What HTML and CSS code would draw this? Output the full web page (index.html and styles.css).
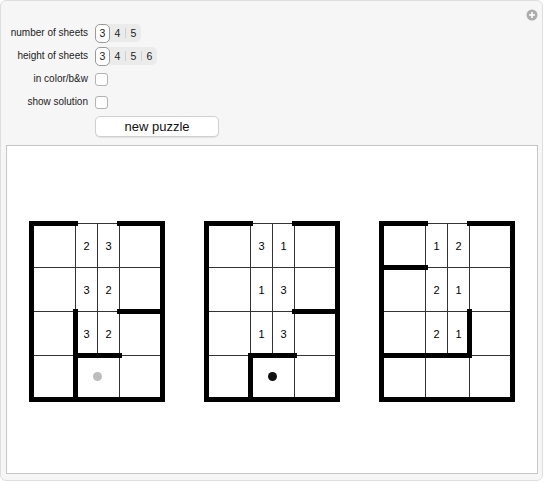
FILE: index.html
```html
<!DOCTYPE html>
<html>
<head>
<meta charset="utf-8">
<link rel="stylesheet" href="styles.css">
</head>
<body>
<div class="panel">
  <svg class="plus" width="12" height="12" viewBox="0 0 12 12">
    <circle cx="6" cy="6" r="5.5" fill="#acacac"/>
    <path d="M6 3v6M3 6h6" stroke="#fff" stroke-width="1.6"/>
  </svg>
  <div class="controls">
    <div class="label">number of sheets</div>
    <div class="seg">
      <span class="opt sel">3</span><span class="opt">4</span><span class="sep"></span><span class="opt">5</span>
    </div>
    <div class="label">height of sheets</div>
    <div class="seg">
      <span class="opt sel">3</span><span class="opt">4</span><span class="sep"></span><span class="opt">5</span><span class="sep"></span><span class="opt">6</span>
    </div>
    <div class="label">in color/b&amp;w</div>
    <div class="cell"><span class="check"></span></div>
    <div class="label">show solution</div>
    <div class="cell"><span class="check"></span></div>
    <div class="label"></div>
    <div class="cell"><button class="btn">new puzzle</button></div>
  </div>
  <div class="pane">
    <svg class="board" width="530" height="327" viewBox="0 0 530 327">
      <defs>
        <g id="thin">
          <path d="M0 0H131M0 44H131M0 88H131M0 132H131M44 0V176M88 0V176M66 0V132" stroke="#333" stroke-width="1" fill="none"/>
        </g>
      </defs>
      <g transform="translate(24.5 77.5)" class="grid">
        <use href="#thin"/>
        <path class="thick" d="M0 0H44M88 0H131M0 0V176M131 0V176M0 176H131M44 88V176M44 132H88M88 88H131"/>
        <text x="55" y="22">2</text><text x="77" y="22">3</text>
        <text x="55" y="66">3</text><text x="77" y="66">2</text>
        <text x="55" y="110">3</text><text x="77" y="110">2</text>
        <circle cx="66" cy="153" r="4.5" fill="#bdbdbd"/>
      </g>
      <g transform="translate(199.5 77.5)" class="grid">
        <use href="#thin"/>
        <path class="thick" d="M0 0H44M88 0H131M0 0V176M131 0V176M0 176H131M44 132V176M44 132H88M88 88H131"/>
        <text x="55" y="22">3</text><text x="77" y="22">1</text>
        <text x="55" y="66">1</text><text x="77" y="66">3</text>
        <text x="55" y="110">1</text><text x="77" y="110">3</text>
        <circle cx="66" cy="153" r="4.5" fill="#111"/>
      </g>
      <g transform="translate(374.5 77.5)" class="grid">
        <use href="#thin"/>
        <path class="thick" d="M0 0H44M88 0H131M0 0V176M131 0V176M0 176H131M0 44H44M88 88V132M0 132H88"/>
        <text x="55" y="22">1</text><text x="77" y="22">2</text>
        <text x="55" y="66">2</text><text x="77" y="66">1</text>
        <text x="55" y="110">2</text><text x="77" y="110">1</text>
      </g>
    </svg>
  </div>
</div>
</body>
</html>
```

FILE: styles.css
```css
html, body {
  margin: 0;
  padding: 0;
  background: #ffffff;
}
body {
  font-family: "Liberation Sans", Arial, sans-serif;
  color: #222;
}
.panel {
  position: relative;
  width: 543px;
  height: 481px;
  box-sizing: border-box;
  border: 1px solid #dedede;
  border-radius: 6px;
  background: #f6f6f6;
}
.plus {
  position: absolute;
  top: 8px;
  right: 4px;
  display: block;
}
.controls {
  display: grid;
  grid-template-columns: 87px auto;
  grid-template-rows: 18px 18px 18px 18px 21px;
  column-gap: 7px;
  row-gap: 5px;
  padding-top: 23px;
}
.label {
  font-size: 10px;
  text-align: right;
  line-height: 18px;
  color: #222;
}
.cell {
  display: flex;
  align-items: center;
}
.seg {
  display: inline-flex;
  align-self: start;
  justify-self: start;
  align-items: center;
  height: 18px;
  background: #ebebeb;
  border-radius: 5px;
  box-sizing: border-box;
}
.opt {
  width: 15px;
  height: 18px;
  box-sizing: border-box;
  display: flex;
  align-items: center;
  justify-content: center;
  font-size: 10.5px;
  color: #222;
}
.opt.sel {
  width: 15px;
  height: 19px;
  background: #fff;
  border: 1px solid #9a9a9a;
  border-radius: 5px;
}
.sep {
  width: 1px;
  height: 10px;
  background: #d0d0d0;
}
.check {
  display: block;
  width: 13px;
  height: 13px;
  box-sizing: border-box;
  border: 1px solid #b4b4b4;
  border-radius: 3px;
  background: #fff;
}
.btn {
  width: 124px;
  height: 21px;
  padding: 0;
  margin: 0;
  box-sizing: border-box;
  border: 1px solid #d0d0d0;
  border-radius: 5px;
  background: #fff;
  font-family: "Liberation Sans", Arial, sans-serif;
  font-size: 13px;
  color: #111;
  box-shadow: 0 1px 1px rgba(0,0,0,0.08);
}
.pane {
  margin-top: 8px;
  margin-left: 5px;
  width: 532px;
  height: 329px;
  box-sizing: border-box;
  border: 1px solid #c6c6c6;
  background: #fff;
}
.board {
  display: block;
}
.thick {
  stroke: #000;
  stroke-width: 5;
  stroke-linecap: square;
  fill: none;
}
.grid text {
  font-family: "Liberation Sans", Arial, sans-serif;
  font-size: 11px;
  text-anchor: middle;
  dominant-baseline: central;
  fill: #000;
}
```
